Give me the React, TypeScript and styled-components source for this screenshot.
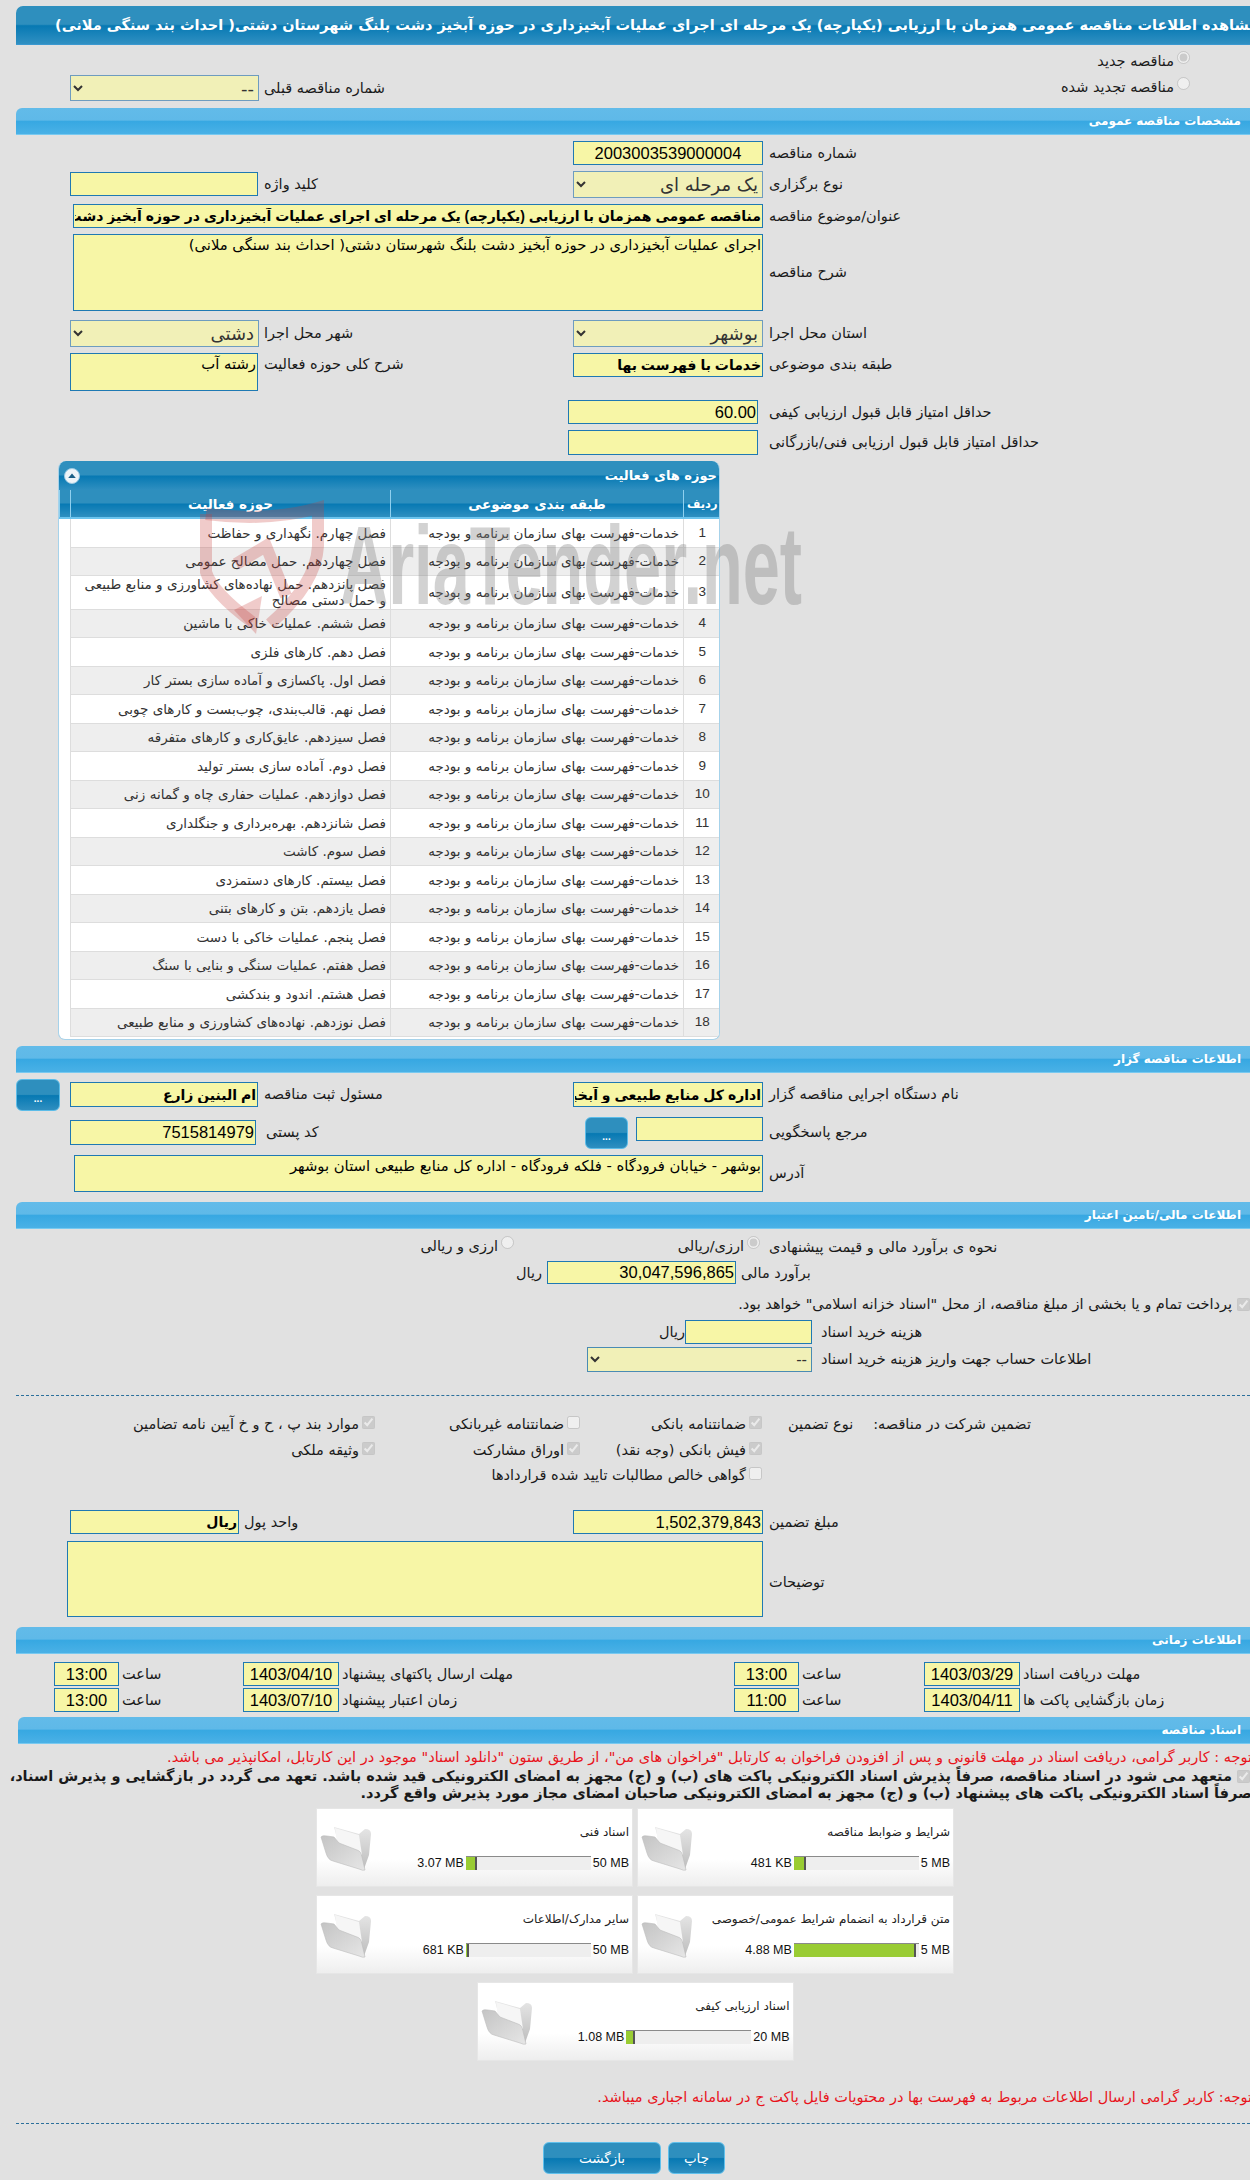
import React, { FC } from "react";
import styled, { createGlobalStyle } from "styled-components";

const GlobalStyle = createGlobalStyle`
  html, body {
    margin: 0;
    padding: 0;
    background: #e1e1e1;
  }
  * { box-sizing: border-box; }
`;

const FONT = `"Liberation Sans", "DejaVu Sans", sans-serif`;
const ARABIC = `"DejaVu Sans", sans-serif`;
const LABEL_SIZE = 14.5;

const Page = styled.div`
  position: relative;
  width: 1250px;
  height: 2180px;
  overflow: hidden;
  padding-top: 6px;
  background: #e1e1e1;
  font-family: ${ARABIC};
  font-size: ${LABEL_SIZE}px;
  color: #1a1a1a;
`;

const TitleBar = styled.div`
  margin-left: 16px;
  height: 39px;
  padding: 0 0 0 39px;
  display: flex;
  align-items: center;
  justify-content: flex-end;
  overflow: hidden;
  border-top-left-radius: 7px;
  border-bottom: 1px solid #3a98d0;
  background: linear-gradient(#2e8fbe 0, #2e8fbe 48%, #0779b3 52%, #3090c2 100%);
  color: #fff;
  font-weight: bold;
  font-size: 14.5px;
  white-space: nowrap;
  direction: rtl;
`;

const SectionBar = styled.div<{ $mt: number; $ml?: number }>`
  margin-top: ${(p) => p.$mt}px;
  margin-left: ${(p) => p.$ml ?? 16}px;
  height: 27px;
  padding-right: 9px;
  display: flex;
  align-items: center;
  justify-content: flex-start;
  border-top-left-radius: 6px;
  border-bottom: 1px solid #78c9f0;
  background: linear-gradient(#62bbe9 0, #5fb9e8 46%, #37a8e2 52%, #4ab1e6 100%);
  color: #fff;
  font-weight: bold;
  font-size: 12px;
  direction: rtl;
`;

const Row = styled.div<{ $mt: number; $h: number }>`
  margin-top: ${(p) => p.$mt}px;
  height: ${(p) => p.$h}px;
  display: grid;
  grid-template-columns: 54px 194px 309px 196px 1fr;
  padding-left: 16px;
  align-items: start;
`;

const Label = styled.label<{ $col: number; $h?: number; $ml?: number }>`
  grid-column: ${(p) => p.$col};
  grid-row: 1;
  margin-left: ${(p) => p.$ml ?? 0}px;
  line-height: ${(p) => p.$h ?? 24}px;
  direction: rtl;
  text-align: left;
  white-space: nowrap;
  font-size: ${LABEL_SIZE}px;
`;

const fieldBase = `
  display: block;
  border: 1px solid #1f79b3;
  background: #f7f6a6;
  color: #000;
  outline: none;
  direction: rtl;
  padding: 0 1px;
  border-radius: 0;
`;

const Input = styled.input<{ $col: number; $span?: number; $w: number; $h?: number; $ml?: number; $mt?: number; $bold?: boolean; $center?: boolean }>`
  ${fieldBase}
  grid-column: ${(p) => p.$col} / span ${(p) => p.$span ?? 1};
  grid-row: 1;
  width: ${(p) => p.$w}px;
  height: ${(p) => p.$h ?? 24}px;
  margin-left: ${(p) => p.$ml ?? 0}px;
  margin-top: ${(p) => p.$mt ?? 0}px;
  font-family: ${FONT};
  font-size: ${(p) => (p.$bold ? 14 : 16.5)}px;
  font-weight: ${(p) => (p.$bold ? "bold" : "normal")};
  text-align: ${(p) => (p.$center ? "center" : "right")};
`;

const TextArea = styled.textarea<{ $col: number; $span?: number; $w: number; $h: number; $ml?: number; $mt?: number }>`
  ${fieldBase}
  grid-column: ${(p) => p.$col} / span ${(p) => p.$span ?? 1};
  grid-row: 1;
  width: ${(p) => p.$w}px;
  height: ${(p) => p.$h}px;
  margin-left: ${(p) => p.$ml ?? 0}px;
  margin-top: ${(p) => p.$mt ?? 0}px;
  resize: none;
  font-family: ${ARABIC};
  font-size: 14.8px;
  line-height: 17px;
  padding-top: 1px;
`;

const Select = styled.select<{ $col?: number; $w: number; $h?: number }>`
  grid-column: ${(p) => p.$col ?? 1};
  grid-row: 1;
  width: ${(p) => p.$w}px;
  height: ${(p) => p.$h ?? 27}px;
  border: 1px solid #6e9cbf;
  border-radius: 0;
  background-color: #f1f0b7;
  color: #333;
  opacity: 1;
  direction: rtl;
  font-family: ${ARABIC};
  font-size: 18px;
`;

const RadioWrap = styled.div<{ $col: number; $pr?: number }>`
  grid-column: ${(p) => p.$col};
  grid-row: 1;
  display: flex;
  direction: rtl;
  align-items: flex-start;
  gap: 3px;
  padding-right: ${(p) => p.$pr ?? 0}px;
  line-height: 24px;
  white-space: nowrap;
`;

const Radio = styled.input.attrs({ type: "radio", disabled: true })`
  width: 13px;
  height: 13px;
  margin: 2px 0 0;
`;

const Check = styled.input.attrs({ type: "checkbox", disabled: true })`
  width: 13px;
  height: 13px;
  margin: 2px 0 0;
  flex: none;
`;

const Panel = styled.div`
  margin: 6px 0 0 58px;
  width: 662px;
  height: 579px;
  background: #fff;
  border: 1px solid #a6d2ea;
  border-top: 0;
  border-radius: 8px 8px 7px 7px;
  overflow: hidden;
`;

const PanelHead = styled.div`
  height: 29px;
  padding: 0 2px 0 5px;
  display: flex;
  justify-content: space-between;
  align-items: center;
  background: linear-gradient(#2e8fbe 0, #2e8fbe 48%, #0779b3 52%, #2f8fc0 100%);
  color: #fff;
  font-weight: bold;
  font-size: 13px;
  direction: rtl;
`;

const Table = styled.table`
  width: 661px;
  border-collapse: collapse;
  table-layout: fixed;
  direction: rtl;
`;

const Th = styled.th<{ $w?: number; $size?: number }>`
  width: ${(p) => (p.$w ? `${p.$w}px` : "auto")};
  height: 28px;
  padding: 0;
  border-left: 1px solid #8fd0ef;
  border-bottom: 2px solid #6cc4ee;
  background: linear-gradient(#2e8fbe 0, #2e8fbe 48%, #0779b3 52%, #2f8fc0 100%);
  color: #fff;
  font-weight: bold;
  font-size: ${(p) => p.$size ?? 13.5}px;
`;

const Tr = styled.tr<{ $h: number; $alt: boolean }>`
  height: ${(p) => p.$h}px;
  td {
    background: ${(p) => (p.$alt ? "#eeeeee" : "#fff")};
  }
`;

const Td = styled.td<{ $num?: boolean }>`
  padding: 0 4px;
  border-bottom: 1px solid #ddd;
  border-left: 1px solid #ddd;
  line-height: 16px;
  color: #333;
  text-align: ${(p) => (p.$num ? "center" : "right")};
  font-family: ${(p) => (p.$num ? FONT : ARABIC)};
  font-size: 13.5px;
`;

const BlankTd = styled.td`
  &&& { background: #fff; }
  padding: 0;
`;

const DotButton = styled.button<{ $col: number; $w: number; $ml?: number }>`
  grid-column: ${(p) => p.$col};
  grid-row: 1;
  width: ${(p) => p.$w}px;
  height: 32px;
  margin-left: ${(p) => p.$ml ?? 0}px;
  padding: 8px 0 0;
  border: 1px solid #5cbce8;
  border-radius: 6px;
  background: linear-gradient(#2e8fbe 0, #2e8fbe 48%, #0779b3 52%, #2f8fc0 100%);
  color: #fff;
  font-family: ${FONT};
  font-weight: bold;
  font-size: 10px;
  line-height: 10px;
`;

const FlexLine = styled.div<{ $mt: number; $pl: number; $gap: number; $h?: number }>`
  margin-top: ${(p) => p.$mt}px;
  height: ${(p) => p.$h ?? 24}px;
  padding-left: ${(p) => p.$pl}px;
  display: flex;
  align-items: flex-start;
  gap: ${(p) => p.$gap}px;
`;

const Plain = styled.span<{ $w?: number; $ml?: number }>`
  ${(p) => (p.$w ? `width: ${p.$w}px;` : "")}
  margin-left: ${(p) => p.$ml ?? 0}px;
  direction: rtl;
  text-align: left;
  white-space: nowrap;
  line-height: 24px;
  font-size: ${LABEL_SIZE}px;
`;

const InlineInput = styled.input<{ $w: number; $h: number }>`
  ${fieldBase}
  width: ${(p) => p.$w}px;
  height: ${(p) => p.$h}px;
  font-family: ${FONT};
  font-size: 16.5px;
`;

const InlineSelect = styled.select<{ $w: number }>`
  width: ${(p) => p.$w}px;
  height: 25px;
  border: 1px solid #4a8bb3;
  background-color: #f1f0b7;
  color: #333;
  opacity: 1;
  direction: rtl;
  border-radius: 0;
  font-family: ${ARABIC};
  font-size: 15px;
`;

const RtlLine = styled.div<{ $mt: number; $mr?: number; $bold?: boolean; $red?: boolean }>`
  margin-top: ${(p) => p.$mt}px;
  margin-right: ${(p) => p.$mr ?? 0}px;
  display: flex;
  direction: rtl;
  gap: 5px;
  white-space: nowrap;
  font-size: ${LABEL_SIZE}px;
  font-weight: ${(p) => (p.$bold ? "bold" : "normal")};
  color: ${(p) => (p.$red ? "#e8141c" : "#1a1a1a")};
  line-height: 17px;
`;

const Dotted = styled.div<{ $mt: number }>`
  margin: ${(p) => p.$mt}px 0 0 16px;
  border-top: 1px dashed #2a6f9b;
  height: 1px;
`;

const GuaranteeGrid = styled.div`
  margin-top: 18px;
  height: 76px;
  display: grid;
  grid-template-columns: 375px 205px 182px 1fr;
  grid-auto-rows: 25.5px;
`;

const CheckItem = styled.div<{ $span?: boolean }>`
  ${(p) => (p.$span ? "grid-column: 1 / span 3;" : "")}
  display: flex;
  direction: rtl;
  gap: 3px;
  line-height: 20px;
  white-space: nowrap;
  font-size: ${LABEL_SIZE}px;
`;

const GuaranteeHead = styled.div`
  padding-left: 26px;
  display: flex;
  gap: 20px;
  line-height: 20px;
  white-space: nowrap;
  font-size: ${LABEL_SIZE}px;
`;

const TimeRow = styled.div<{ $mt: number }>`
  margin-top: ${(p) => p.$mt}px;
  height: 24px;
  padding-left: 54px;
  display: grid;
  grid-template-columns: 65px 124px 96px 395px 65px 125px 96px 1fr;
`;

const TimeInput = styled.input`
  ${fieldBase}
  width: 100%;
  height: 24px;
  text-align: center;
  direction: ltr;
  font-family: ${FONT};
  font-size: 16.5px;
`;

const TimeLabel = styled.span`
  padding-left: 3px;
  direction: rtl;
  text-align: left;
  white-space: nowrap;
  line-height: 24px;
  font-size: ${LABEL_SIZE}px;
`;

const Cards = styled.div`
  margin: 6px 0 0 316px;
  width: 638px;
  display: flex;
  flex-wrap: wrap;
  justify-content: center;
  gap: 8px 4px;
  direction: rtl;
`;

const CardBox = styled.div`
  width: 317px;
  height: 79px;
  padding: 14px 3px 0 0;
  display: grid;
  grid-template-columns: 1fr 56px;
  border: 1px solid #e6e6e6;
  background: linear-gradient(#fff 0, #fff 65%, #eeeeee 100%);
`;

const CardBody = styled.div`
  min-width: 0;
`;

const CardTitle = styled.div`
  height: 18px;
  line-height: 18px;
  font-size: 12px;
  color: #222;
  white-space: nowrap;
`;

const Meter = styled.div`
  margin-top: 15px;
  display: flex;
  align-items: center;
  gap: 2px;
  font-family: ${FONT};
  font-size: 12.5px;
  color: #111;
  line-height: 14px;
`;

const MeterText = styled.span.attrs({ dir: "ltr" })`
  white-space: nowrap;
`;

const MeterTrack = styled.div`
  width: 125px;
  height: 14px;
  border-top: 1px solid #8a8a8a;
  background: #eeeeee;
  direction: ltr;
`;

const MeterFill = styled.div`
  height: 13px;
  background: #99cc33;
  border-right: 2px solid #555;
`;

const Actions = styled.div`
  margin: 18px 0 0 543px;
  display: flex;
  gap: 7px;
`;

const ActionButton = styled.button<{ $w: number }>`
  width: ${(p) => p.$w}px;
  height: 32px;
  padding: 0;
  border: 1px solid #5fc0ec;
  border-radius: 6px;
  background: linear-gradient(#2e8fbe 0, #2e8fbe 48%, #0779b3 52%, #2f8fc0 100%);
  color: #fff;
  font-family: ${ARABIC};
  font-size: 13.5px;
`;

const WatermarkSvg = styled.svg`
  position: absolute;
  left: 190px;
  top: 500px;
  pointer-events: none;
`;

const FolderSvg = styled.svg`
  margin-top: 2px;
`;

const CollapseIcon: FC = () => (
  <svg width="16" height="16" viewBox="0 0 16 16">
    <circle cx="8" cy="8" r="7.5" fill="#eef4f8" stroke="#9cc9e2" />
    <path d="M4.2 10 L8 5.6 L11.8 10 Z" fill="#1c5f86" />
  </svg>
);

const Watermark: FC = () => (
  <WatermarkSvg width="620" height="170" viewBox="0 0 620 170">
    <text
      x="150"
      y="104"
      textLength="462"
      lengthAdjust="spacingAndGlyphs"
      fontFamily="Liberation Sans, sans-serif"
      fontWeight="bold"
      fontSize="112"
      fill="#7d7d7d"
      opacity="0.34"
    >
      AriaTender.net
    </text>
    <g fill="none" stroke="#c8403c" strokeOpacity="0.27" strokeWidth="12">
      <path d="M16 14 Q78 22 128 8 L128 46 Q126 84 80 124" />
      <path d="M16 14 L16 72 Q22 92 62 122" />
      <path d="M46 64 L76 46 L96 96" />
    </g>
    <path d="M44 110 L72 96 L66 134 Z" fill="#c8403c" fillOpacity="0.27" />
  </WatermarkSvg>
);

const Folder: FC = () => (
  <FolderSvg width="54" height="48" viewBox="0 0 54 48">
    <defs>
      <linearGradient id="fback" x1="0" y1="0" x2="0" y2="1">
        <stop offset="0" stopColor="#e6e6e6" />
        <stop offset="1" stopColor="#bdbdbd" />
      </linearGradient>
      <linearGradient id="ffront" x1="0" y1="0" x2="1" y2="1">
        <stop offset="0" stopColor="#c4c4c4" />
        <stop offset="1" stopColor="#e6e6e6" />
      </linearGradient>
    </defs>
    <path d="M15 2 L40 9 L46 4 Q52 4 52 9 L50 30 L45 44 L20 20 Z" fill="url(#fback)" />
    <path d="M16 3 L40 10 L43 30 L18 18 Z" fill="#f6f6f6" />
    <path d="M2 12 Q3 10 8 11 L15 12 L20 18 L38 25 Q42 26 43 32 L46 45 Q44 46 40 44 L14 36 Q9 35 7 28 Z" fill="url(#ffront)" stroke="#bcbcbc" strokeWidth="0.6" />
  </FolderSvg>
);

const docs = [
  { title: "شرایط و ضوابط مناقصه", used: "481 KB", max: "5 MB", fill: 12 },
  { title: "اسناد فنی", used: "3.07 MB", max: "50 MB", fill: 11 },
  { title: "متن قرارداد به انضمام شرایط عمومی/خصوصی", used: "4.88 MB", max: "5 MB", fill: 122 },
  { title: "سایر مدارک/اطلاعات", used: "681 KB", max: "50 MB", fill: 3 },
  { title: "اسناد ارزیابی کیفی", used: "1.08 MB", max: "20 MB", fill: 9 },
];

const activities = [
  "فصل چهارم. نگهداری و حفاظت",
  "فصل چهاردهم. حمل مصالح عمومی",
  "فصل پانزدهم. حمل نهاده‌های کشاورزی و منابع طبیعی و حمل دستی مصالح",
  "فصل ششم. عملیات خاکی با ماشین",
  "فصل دهم. کارهای فلزی",
  "فصل اول. پاکسازی و آماده سازی بستر کار",
  "فصل نهم. قالب‌بندی، چوب‌بست و کارهای چوبی",
  "فصل سیزدهم. عایق‌کاری و کارهای متفرقه",
  "فصل دوم. آماده سازی بستر تولید",
  "فصل دوازدهم. عملیات حفاری چاه و گمانه زنی",
  "فصل شانزدهم. بهره‌برداری و جنگلداری",
  "فصل سوم. کاشت",
  "فصل بیستم. کارهای دستمزدی",
  "فصل یازدهم. بتن و کارهای بتنی",
  "فصل پنجم. عملیات خاکی با دست",
  "فصل هفتم. عملیات سنگی و بنایی با سنگ",
  "فصل هشتم. اندود و بندکشی",
  "فصل نوزدهم. نهاده‌های کشاورزی و منابع طبیعی",
];

const rowHeight = (i: number) => (i === 2 ? 34 : i % 2 === 0 ? 29 : 28);

const TITLE =
  "مناقصه عمومی همزمان با ارزیابی (یکپارچه) یک مرحله ای اجرای عملیات آبخیزداری در حوزه آبخیز دشت بلنگ شهرستان دشتی( احداث بند سنگی ملانی)";

const App: FC = () => (
  <Page>
    <GlobalStyle />
    <TitleBar>مشاهده اطلاعات {TITLE}</TitleBar>

    <Row $mt={4} $h={24}>
      <RadioWrap $col={5} $pr={60}>
        <Radio defaultChecked name="kind" />
        <span>مناقصه جدید</span>
      </RadioWrap>
    </Row>
    <Row $mt={2} $h={26}>
      <Select $col={2} $w={189} $h={26}>
        <option>--</option>
      </Select>
      <Label $col={3} $h={26}>شماره مناقصه قبلی</Label>
      <RadioWrap $col={5} $pr={60}>
        <Radio name="kind" />
        <span>مناقصه تجدید شده</span>
      </RadioWrap>
    </Row>

    <SectionBar $mt={7}>مشخصات مناقصه عمومی</SectionBar>

    <Row $mt={6} $h={24}>
      <Input $col={4} $w={190} $center readOnly defaultValue="2003003539000004" />
      <Label $col={5}>شماره مناقصه</Label>
    </Row>
    <Row $mt={6} $h={27}>
      <Input $col={2} $w={188} $mt={1} readOnly />
      <Label $col={3} $h={27}>کلید واژه</Label>
      <Select $col={4} $w={190}>
        <option>یک مرحله ای</option>
      </Select>
      <Label $col={5} $h={27}>نوع برگزاری</Label>
    </Row>
    <Row $mt={6} $h={24}>
      <Input $col={2} $span={3} $w={690} $ml={3} $bold readOnly defaultValue={TITLE} />
      <Label $col={5}>عنوان/موضوع مناقصه</Label>
    </Row>
    <Row $mt={6} $h={77}>
      <TextArea
        $col={2}
        $span={3}
        $w={690}
        $h={77}
        $ml={3}
        readOnly
        defaultValue="اجرای عملیات آبخیزداری در حوزه آبخیز دشت بلنگ شهرستان دشتی( احداث بند سنگی ملانی)"
      />
      <Label $col={5} $h={77}>شرح مناقصه</Label>
    </Row>
    <Row $mt={9} $h={27}>
      <Select $col={2} $w={189}>
        <option>دشتی</option>
      </Select>
      <Label $col={3} $h={27}>شهر محل اجرا</Label>
      <Select $col={4} $w={190}>
        <option>بوشهر</option>
      </Select>
      <Label $col={5} $h={27}>استان محل اجرا</Label>
    </Row>
    <Row $mt={6} $h={38}>
      <TextArea $col={2} $w={188} $h={38} readOnly defaultValue="رشته آب" />
      <Label $col={3} $h={22}>شرح کلی حوزه فعالیت</Label>
      <Input $col={4} $w={190} $bold readOnly defaultValue="خدمات با فهرست بها" />
      <Label $col={5} $h={22}>طبقه بندی موضوعی</Label>
    </Row>
    <Row $mt={9} $h={24}>
      <Input $col={4} $w={190} $ml={-5} readOnly defaultValue="60.00" />
      <Label $col={5}>حداقل امتیاز قابل قبول ارزیابی کیفی</Label>
    </Row>
    <Row $mt={6} $h={25}>
      <Input $col={4} $w={190} $ml={-5} $h={25} readOnly />
      <Label $col={5} $h={25}>حداقل امتیاز قابل قبول ارزیابی فنی/بازرگانی</Label>
    </Row>

    <Panel>
      <PanelHead>
        <span>حوزه های فعالیت</span>
        <CollapseIcon />
      </PanelHead>
      <Table>
        <thead>
          <tr>
            <Th $w={37} $size={11.5}>ردیف</Th>
            <Th $w={293}>طبقه بندی موضوعی</Th>
            <Th $w={320}>حوزه فعالیت</Th>
            <Th $w={11} />
          </tr>
        </thead>
        <tbody>
          {activities.map((activity, i) => (
            <Tr key={activity} $h={rowHeight(i)} $alt={i % 2 === 1}>
              <Td $num>{i + 1}</Td>
              <Td>خدمات-فهرست بهای سازمان برنامه و بودجه</Td>
              <Td>{activity}</Td>
              <BlankTd />
            </Tr>
          ))}
        </tbody>
      </Table>
    </Panel>

    <SectionBar $mt={6}>اطلاعات مناقصه گزار</SectionBar>

    <Row $mt={6} $h={32}>
      <DotButton $col={1} $w={44}>...</DotButton>
      <Input $col={2} $w={188} $mt={3} $h={25} $bold readOnly defaultValue="ام البنین زارع" />
      <Label $col={3} $h={31}>مسئول ثبت مناقصه</Label>
      <Input $col={4} $w={190} $mt={3} $h={25} $bold readOnly defaultValue="اداره کل منابع طبیعی و آبخیزداری استان بوشهر" />
      <Label $col={5} $h={31}>نام دستگاه اجرایی مناقصه گزار</Label>
    </Row>
    <Row $mt={6} $h={32}>
      <Input $col={2} $w={186} $mt={3} $h={25} readOnly defaultValue="7515814979" />
      <Label $col={3} $h={31} $ml={2}>کد پستی</Label>
      <DotButton $col={4} $w={43} $ml={12}>...</DotButton>
      <Input $col={4} $w={127} $ml={63} readOnly />
      <Label $col={5} $h={31}>مرجع پاسخگویی</Label>
    </Row>
    <Row $mt={6} $h={37}>
      <TextArea
        $col={2}
        $span={3}
        $w={689}
        $h={37}
        $ml={4}
        readOnly
        defaultValue="بوشهر - خیابان فرودگاه - فلکه فرودگاه - اداره کل منابع طبیعی استان بوشهر"
      />
      <Label $col={5} $h={37}>آدرس</Label>
    </Row>

    <SectionBar $mt={10}>اطلاعات مالی/تامین اعتبار</SectionBar>

    <Row $mt={5} $h={26}>
      <RadioWrap $col={3} $pr={59}>
        <Radio name="cur" />
        <span>ارزی و ریالی</span>
      </RadioWrap>
      <RadioWrap $col={4} $pr={9}>
        <Radio name="cur" defaultChecked />
        <span>ارزی/ریالی</span>
      </RadioWrap>
      <Label $col={5} $h={26}>نحوه ی برآورد مالی و قیمت پیشنهادی</Label>
    </Row>
    <FlexLine $mt={1} $pl={519} $gap={5} $h={23}>
      <Plain $w={23}>ریال</Plain>
      <InlineInput $w={189} $h={23} readOnly defaultValue="30,047,596,865" />
      <Plain>برآورد مالی</Plain>
    </FlexLine>
    <RtlLine $mt={12}>
      <Check defaultChecked />
      <span>پرداخت تمام و یا بخشی از مبلغ مناقصه، از محل "اسناد خزانه اسلامی" خواهد بود.</span>
    </RtlLine>
    <FlexLine $mt={7} $pl={662} $gap={0} $h={24}>
      <Plain $w={23}>ریال</Plain>
      <InlineInput $w={127} $h={24} readOnly />
      <Plain $ml={9}>هزینه خرید اسناد</Plain>
    </FlexLine>
    <FlexLine $mt={3} $pl={587} $gap={9} $h={25}>
      <InlineSelect $w={225}>
        <option>--</option>
      </InlineSelect>
      <Plain>اطلاعات حساب جهت واریز هزینه خرید اسناد</Plain>
    </FlexLine>

    <Dotted $mt={23} />

    <GuaranteeGrid>
      <CheckItem>
        <Check defaultChecked />
        <span>موارد بند پ ، ح و خ آیین نامه تضامین</span>
      </CheckItem>
      <CheckItem>
        <Check />
        <span>ضمانتنامه غیربانکی</span>
      </CheckItem>
      <CheckItem>
        <Check defaultChecked />
        <span>ضمانتنامه بانکی</span>
      </CheckItem>
      <GuaranteeHead>
        <span dir="rtl">نوع تضمین</span>
        <span dir="rtl">تضمین شرکت در مناقصه:</span>
      </GuaranteeHead>
      <CheckItem>
        <Check defaultChecked />
        <span>وثیقه ملکی</span>
      </CheckItem>
      <CheckItem>
        <Check defaultChecked />
        <span>اوراق مشارکت</span>
      </CheckItem>
      <CheckItem>
        <Check defaultChecked />
        <span>فیش بانکی (وجه نقد)</span>
      </CheckItem>
      <div />
      <CheckItem $span>
        <Check />
        <span>گواهی خالص مطالبات تایید شده قراردادها</span>
      </CheckItem>
    </GuaranteeGrid>

    <Row $mt={20} $h={24}>
      <Input $col={2} $w={169} $bold readOnly defaultValue="ریال" />
      <Label $col={3} $ml={-20}>واحد پول</Label>
      <Input $col={4} $w={190} readOnly defaultValue="1,502,379,843" />
      <Label $col={5}>مبلغ تضمین</Label>
    </Row>
    <Row $mt={7} $h={76}>
      <TextArea $col={2} $span={3} $w={696} $h={76} $ml={-3} readOnly />
      <Label $col={5} $h={82}>توضیحات</Label>
    </Row>

    <SectionBar $mt={10}>اطلاعات زمانی</SectionBar>

    <TimeRow $mt={8}>
      <TimeInput readOnly defaultValue="13:00" />
      <TimeLabel>ساعت</TimeLabel>
      <TimeInput readOnly defaultValue="1403/04/10" />
      <TimeLabel>مهلت ارسال پاکتهای پیشنهاد</TimeLabel>
      <TimeInput readOnly defaultValue="13:00" />
      <TimeLabel>ساعت</TimeLabel>
      <TimeInput readOnly defaultValue="1403/03/29" />
      <TimeLabel>مهلت دریافت اسناد</TimeLabel>
    </TimeRow>
    <TimeRow $mt={2}>
      <TimeInput readOnly defaultValue="13:00" />
      <TimeLabel>ساعت</TimeLabel>
      <TimeInput readOnly defaultValue="1403/07/10" />
      <TimeLabel>زمان اعتبار پیشنهاد</TimeLabel>
      <TimeInput readOnly defaultValue="11:00" />
      <TimeLabel>ساعت</TimeLabel>
      <TimeInput readOnly defaultValue="1403/04/11" />
      <TimeLabel>زمان بازگشایی پاکت ها</TimeLabel>
    </TimeRow>

    <SectionBar $mt={5} $ml={18}>اسناد مناقصه</SectionBar>

    <RtlLine $mt={5} $red $mr={-2}>
      توجه : کاربر گرامی، دریافت اسناد در مهلت قانونی و پس از افزودن فراخوان به کارتابل "فراخوان های من"، از طریق ستون "دانلود اسناد" موجود در این کارتابل، امکانپذیر می باشد.
    </RtlLine>
    <RtlLine $mt={2} $bold>
      <Check defaultChecked />
      <span>متعهد می شود در اسناد مناقصه، صرفاً پذیرش اسناد الکترونیکی پاکت های (ب) و (ج) مجهز به امضای الکترونیکی قید شده باشد. تعهد می گردد در بازگشایی و پذیرش اسناد،</span>
    </RtlLine>
    <RtlLine $mt={0} $bold $mr={-2}>
      صرفاً اسناد الکترونیکی پاکت های پیشنهاد (ب) و (ج) مجهز به امضای الکترونیکی صاحبان امضای مجاز مورد پذیرش واقع گردد.
    </RtlLine>

    <Cards>
      {docs.map((doc) => (
        <CardBox key={doc.title}>
          <CardBody>
            <CardTitle>{doc.title}</CardTitle>
            <Meter>
              <MeterText>{doc.max}</MeterText>
              <MeterTrack>
                <MeterFill style={{ width: doc.fill }} />
              </MeterTrack>
              <MeterText>{doc.used}</MeterText>
            </Meter>
          </CardBody>
          <Folder />
        </CardBox>
      ))}
    </Cards>

    <RtlLine $mt={28} $red $mr={-2}>
      توجه: کاربر گرامی ارسال اطلاعات مربوط به فهرست بها در محتویات فایل پاکت ج در سامانه اجباری میباشد.
    </RtlLine>

    <Dotted $mt={17} />

    <Actions>
      <ActionButton $w={118}>بازگشت</ActionButton>
      <ActionButton $w={57}>چاپ</ActionButton>
    </Actions>

    <Watermark />
  </Page>
);

export default App;
